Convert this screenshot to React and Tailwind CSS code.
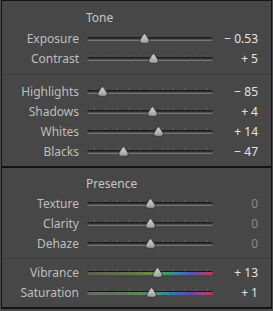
import React from "react";

const font = "font-['Noto_Sans',sans-serif] [font-stretch:condensed] text-[12px] leading-[16px]";

const VIB =
  "linear-gradient(to right,#5c6250 0%,#667646 35%,#6c8a40 50%,#3c9a6a 64%,#3a7ab0 74%,#5a50b0 84%,#a04080 93%,#c83a3a 100%)";
const SAT =
  "linear-gradient(to right,#6a6a6a 0%,#63765e 25%,#5a8a50 42%,#3a9a80 56%,#3a70b8 70%,#6048b0 82%,#a84080 92%,#c83838 100%)";

function Thumb({ left }) {
  return (
    <svg
      width="11"
      height="11"
      viewBox="0 0 11 11"
      className="absolute top-[4px]"
      style={{ left }}
    >
      <defs>
        <linearGradient id="tg" x1="0" y1="0" x2="0" y2="1">
          <stop offset="0" stopColor="#d4d4d4" />
          <stop offset="1" stopColor="#9a9a9a" />
        </linearGradient>
      </defs>
      <path
        d="M5.5 0.8 C6.2 0.8 6.6 1.5 7.2 2.4 L9.6 6 C10.4 7.2 10.4 8.6 9.6 9.4 C8.8 10.2 7.2 10.3 5.5 10.3 C3.8 10.3 2.2 10.2 1.4 9.4 C0.6 8.6 0.6 7.2 1.4 6 L3.8 2.4 C4.4 1.5 4.8 0.8 5.5 0.8 Z"
        fill="url(#tg)"
        stroke="#2a2a2a"
        strokeWidth="0.8"
      />
    </svg>
  );
}

function Slider({ pos, ticks = true, gradient }) {
  return (
    <div className="relative w-[126px] h-[20px] shrink-0">
      {ticks && (
        <div className="absolute left-[7px] w-[114px] top-[6px] h-[2px] flex justify-between">
          {Array.from({ length: 11 }).map((_, i) => (
            <div key={i} className="w-px h-full bg-[#626262]" />
          ))}
        </div>
      )}
      {gradient ? (
        <div className="absolute left-0 right-0 top-[8px] h-[4px] rounded-full border-t border-[#161616] overflow-hidden bg-[#1e1e1e]">
          <div className="h-full w-full" style={{ background: gradient }} />
        </div>
      ) : (
        <div className="absolute left-0 right-0 top-[8px] h-[4px] rounded-full bg-[linear-gradient(to_bottom,#141414_0%,#2c2c2c_35%,#5a5a5a_70%,#8a8a8a_100%)]" />
      )}
      <Thumb left={pos - 87 - 5.5} />
    </div>
  );
}

function Row({ label, pos, value, ticks, gradient }) {
  const zero = value === "0";
  return (
    <div className={`flex items-center h-[20px] ${font}`}>
      <div className="w-[77px] text-right text-[#bfbfbf] whitespace-nowrap">{label}</div>
      <div className="w-[8px] shrink-0" />
      <Slider pos={pos} ticks={ticks} gradient={gradient} />
      <div
        className={`w-[45px] text-right whitespace-pre ${zero ? "text-[#8a8a8a]" : "text-[#e4e4e4]"}`}
      >
        {value}
      </div>
    </div>
  );
}

function Sep({ mt, mb }) {
  return <div className={`h-px bg-[#3b3b3b] ${mt} ${mb}`} />;
}

export default function App() {
  return (
    <div className="w-[273px] h-[311px] bg-[#4a4a4a] px-[1px]">
      <div className="w-[271px] h-[309px] bg-[#474747] border-x border-t border-b-2 border-[#141414] flex flex-col">
        {/* Tone */}
        <div className="h-[165px] flex flex-col">
          <div className={`h-[28px] pt-[9px] pl-[84px] text-[#c6c6c6] ${font}`}>Tone</div>
          <Row label="Exposure" pos={144.7} value={"− 0.53"} ticks={false} />
          <Row label="Contrast" pos={153.3} value={"+ 5"} />
          <Sep mt="mt-[5px]" mb="mb-[7px]" />
          <Row label="Highlights" pos={102} value={"− 85"} />
          <Row label="Shadows" pos={152.3} value={"+ 4"} />
          <Row label="Whites" pos={158.3} value={"+ 14"} />
          <Row label="Blacks" pos={123} value={"− 47"} />
        </div>
        <div className="h-[2px] bg-[#141414]" />
        {/* Presence */}
        <div className="flex flex-col">
          <div className={`h-[26px] pt-[8px] pl-[84px] text-[#c6c6c6] ${font}`}>Presence</div>
          <Row label="Texture" pos={150.3} value="0" />
          <Row label="Clarity" pos={150.3} value="0" />
          <Row label="Dehaze" pos={150.3} value="0" />
          <Sep mt="mt-[4px]" mb="mb-[4px]" />
          <Row label="Vibrance" pos={157.3} value={"+ 13"} gradient={VIB} />
          <Row label="Saturation" pos={151.3} value={"+ 1"} gradient={SAT} />
        </div>
      </div>
    </div>
  );
}
